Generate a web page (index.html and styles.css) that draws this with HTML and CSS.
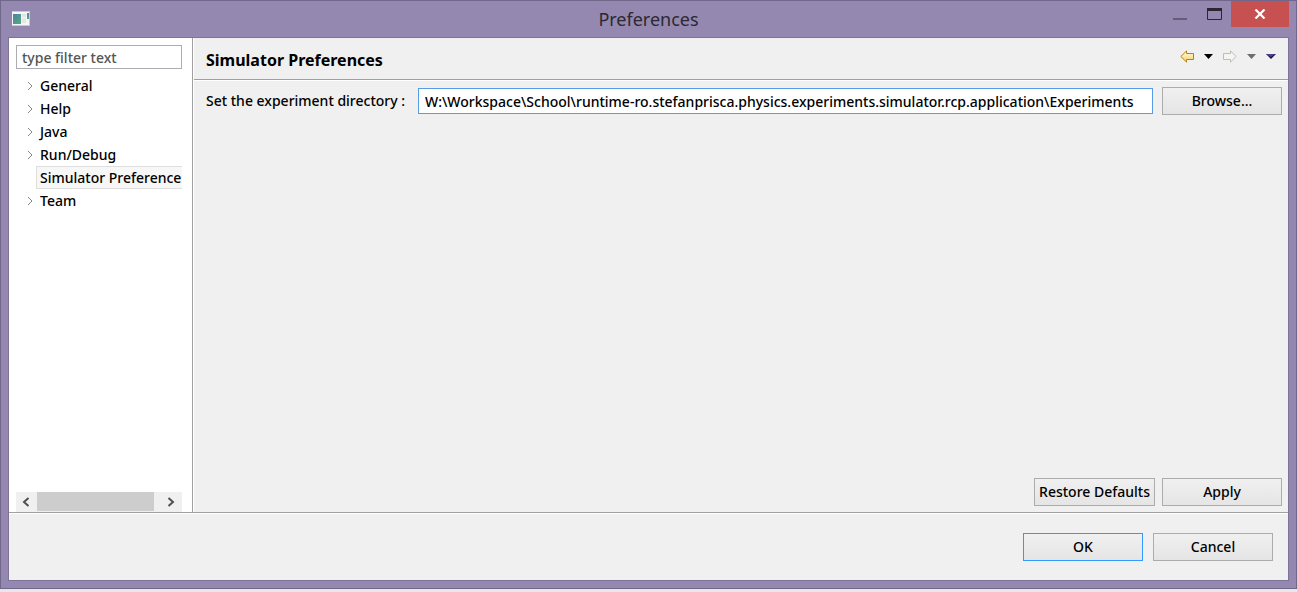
FILE: index.html
```html
<!DOCTYPE html>
<html lang="en">
<head>
<meta charset="utf-8">
<meta name="viewport" content="width=device-width, initial-scale=1">
<title>Preferences</title>
<link rel="stylesheet" href="styles.css">
</head>
<body>
<div class="window">
  <header class="titlebar">
    <svg class="app-icon" width="18" height="15" viewBox="0 0 18 15" aria-hidden="true">
      <defs><linearGradient id="pane" x1="0" y1="0" x2="1" y2="1"><stop offset="0" stop-color="#4d7fae"/><stop offset="1" stop-color="#52ae7a"/></linearGradient></defs>
      <rect width="18" height="15" fill="#c9c8cc"/>
      <rect y="1" width="17" height="13" fill="#f6f6f4"/>
      <rect x="1" y="3" width="8" height="10" fill="url(#pane)"/>
      <rect x="10" y="3" width="4" height="3" fill="#e2e2e6"/>
      <rect x="10" y="7" width="4" height="5" fill="#e6e6e6"/>
      <rect x="15" y="2" width="2" height="6" fill="url(#pane)"/>
    </svg>
    <h1 class="window-title">Preferences</h1>
    <div class="window-controls">
      <button class="win-btn" type="button" aria-label="Minimize"><svg width="14" height="12" viewBox="0 0 14 12"><path d="M0 11h14" stroke="#655b7a" stroke-width="2"/></svg></button>
      <button class="win-btn" type="button" aria-label="Maximize"><svg width="15" height="12" viewBox="0 0 15 12"><path d="M.5 1.5h14v10H.5z" fill="none" stroke="#2a2532"/><path d="M0 1.5h15" stroke="#2a2532" stroke-width="3"/></svg></button>
      <button class="win-btn win-close" type="button" aria-label="Close"><svg width="12" height="10" viewBox="0 0 12 10"><path d="M1.5.5l9 9M10.5.5l-9 9" stroke="#fff" stroke-width="2.2"/></svg></button>
    </div>
  </header>

  <div class="client">
    <div class="panes">
      <nav class="sidebar" aria-label="Preference pages">
        <input class="filter" type="text" placeholder="type filter text" aria-label="Filter">
        <ul class="tree">
          <li class="node"><svg class="twisty" width="6" height="11" viewBox="0 0 6 11"><path d="M1 2l4 4-4 4"/></svg><a class="node-label" href="#general">General</a></li>
          <li class="node"><svg class="twisty" width="6" height="11" viewBox="0 0 6 11"><path d="M1 2l4 4-4 4"/></svg><a class="node-label" href="#help">Help</a></li>
          <li class="node"><svg class="twisty" width="6" height="11" viewBox="0 0 6 11"><path d="M1 2l4 4-4 4"/></svg><a class="node-label" href="#java">Java</a></li>
          <li class="node"><svg class="twisty" width="6" height="11" viewBox="0 0 6 11"><path d="M1 2l4 4-4 4"/></svg><a class="node-label" href="#run">Run/Debug</a></li>
          <li class="node"><span class="twisty"></span><a class="node-label selected" href="#simulator" aria-current="page">Simulator Preferences</a></li>
          <li class="node"><svg class="twisty" width="6" height="11" viewBox="0 0 6 11"><path d="M1 2l4 4-4 4"/></svg><a class="node-label" href="#team">Team</a></li>
        </ul>
        <div class="scrollbar">
          <button class="scroll-btn" type="button" aria-label="Scroll left"><svg width="9" height="10" viewBox="0 0 9 10"><path d="M6.5 1L2 5l4.500 4"/></svg></button>
          <div class="track"><div class="thumb"></div></div>
          <button class="scroll-btn" type="button" aria-label="Scroll right"><svg width="9" height="10" viewBox="0 0 9 10"><path d="M1.500 1L6 5 1.500 9"/></svg></button>
        </div>
      </nav>

      <main class="page">
        <div class="page-head">
          <h2 class="page-title">Simulator Preferences</h2>
          <div class="history">
            <button class="tool" type="button" aria-label="Back"><svg width="14" height="13" viewBox="0 0 14 13"><defs><linearGradient id="gold" x1="0" y1="0" x2="0" y2="1"><stop offset="0" stop-color="#fffbe0"/><stop offset="1" stop-color="#f6d368"/></linearGradient></defs><path d="M.8 6.500L6.500.9v2.600h7v6h-7v2.600z" fill="url(#gold)" stroke="#b9801a"/></svg></button>
            <button class="tool" type="button" aria-label="Back history"><svg width="9" height="5" viewBox="0 0 9 5"><path d="M0 0h9L4.500 5z" fill="#000"/></svg></button>
            <button class="tool" type="button" aria-label="Forward" disabled><svg width="14" height="13" viewBox="0 0 14 13"><path d="M13.200 6.500L7.500.9v2.600h-7v6h7v2.600z" fill="#f4f4f0" stroke="#bdbdb8"/></svg></button>
            <button class="tool" type="button" aria-label="Forward history" disabled><svg width="9" height="5" viewBox="0 0 9 5"><path d="M0 0h9L4.500 5z" fill="#6d6d6d"/></svg></button>
            <button class="tool" type="button" aria-label="View menu"><svg width="10" height="5" viewBox="0 0 10 5"><path d="M0 0h10L5 5z" fill="#16123a"/><path d="M0 0h9L5 3z" fill="#4a4296"/></svg></button>
          </div>
        </div>
        <div class="page-body">
          <div class="field">
            <label class="field-label" for="dir">Set the experiment directory :</label>
            <input class="field-input" id="dir" type="text" value="W:\Workspace\School\runtime-ro.stefanprisca.physics.experiments.simulator.rcp.application\Experiments">
            <button class="btn" type="button">Browse...</button>
          </div>
          <div class="page-actions">
            <button class="btn btn-tight" type="button">Restore Defaults</button>
            <button class="btn" type="button">Apply</button>
          </div>
        </div>
      </main>
    </div>
    <footer class="dialog-actions">
      <button class="btn btn-default" type="button">OK</button>
      <button class="btn" type="button">Cancel</button>
    </footer>
  </div>
</div>
</body>
</html>
```
FILE: styles.css
```css
* { box-sizing: border-box; }

body {
  display: flex;
  min-height: 100vh;
  margin: 0;
  padding-bottom: 3px;
  background: #e8e8e8;
  color: #000;
  font: 500 14px/22px "Segoe UI", "Noto Sans", "Open Sans", sans-serif;
}

button, input { font: inherit; color: inherit; }
button { padding: 0; }
svg { display: block; flex: none; }

.window {
  display: flex;
  flex-direction: column;
  flex: 1;
  min-width: 0;
  padding: 0 7px 7px;
  border: 1px solid #71678a;
  background: #9488b0;
}

.titlebar {
  display: grid;
  grid-template-columns: 126px 1fr 126px;
  align-items: start;
  height: 36px;
}
.app-icon { margin: 10px 0 0 4px; }
.window-title {
  margin: 0;
  font-size: 18px;
  font-weight: 400;
  line-height: 36px;
  text-align: center;
  color: #2b2933;
}
.window-controls { display: flex; justify-content: flex-end; }
.win-btn {
  display: flex;
  align-items: center;
  justify-content: center;
  width: 34px;
  height: 26px;
  border: 0;
  background: none;
}
.win-close { width: 58px; background: #c75050; }

.client {
  display: flex;
  flex-direction: column;
  flex: 1;
  border: 1px solid #7e7399;
  background: #f0f0f0;
}
.panes { display: flex; flex: 1; min-height: 0; }

.sidebar {
  display: flex;
  flex-direction: column;
  width: 184px;
  padding: 7px 10px 0 7px;
  border-right: 1px solid #a0a0a0;
  background: #fff;
}
.filter {
  width: 100%;
  height: 24px;
  padding: 0 5px;
  border: 1px solid #abadb3;
  background: #fff;
}
.filter::placeholder { color: #555; opacity: 1; }
.tree {
  flex: 1;
  margin: 5px 0 0;
  padding: 0;
  overflow: hidden;
  list-style: none;
}
.node {
  display: flex;
  align-items: center;
  gap: 3px;
  height: 23px;
  padding-left: 11px;
}
.twisty { flex: none; width: 6px; fill: none; stroke: #888; }
.node-label {
  padding: 0 3px;
  border: 1px solid transparent;
  line-height: 21px;
  white-space: nowrap;
  color: inherit;
  text-decoration: none;
}
.selected { border-color: #dedede; background: #f7f7f7; }

.scrollbar { display: flex; height: 20px; background: #f0f0f0; }
.scroll-btn {
  display: flex;
  align-items: center;
  justify-content: center;
  width: 21px;
  border: 0;
  background: none;
}
.scroll-btn svg { fill: none; stroke: #505050; stroke-width: 2; }
.track { flex: 1; }
.thumb { width: 94%; height: 19px; background: #cdcdcd; }

.page {
  display: flex;
  flex-direction: column;
  flex: 1;
  min-width: 0;
  border-left: 1px solid #fff;
}
.page-head {
  display: flex;
  align-items: center;
  justify-content: space-between;
  height: 42px;
  padding: 2px 12px 0;
  border-bottom: 1px solid #a0a0a0;
}
.page-title { margin: 0; font-size: 16px; font-weight: 700; line-height: 22px; }
.history { display: flex; align-items: center; gap: 10px; padding-bottom: 7px; }
.tool { border: 0; background: none; }

.page-body {
  display: flex;
  flex-direction: column;
  justify-content: space-between;
  flex: 1;
  padding: 6px 6px 6px 12px;
  border-top: 1px solid #fff;
}
.field { display: flex; align-items: center; gap: 9px; }
.field-label { min-width: 203px; white-space: nowrap; }
.field-input {
  flex: 1;
  min-width: 0;
  height: 26px;
  padding: 0 6px;
  border: 1px solid #569de5;
  background: #fff;
}

.btn {
  width: 120px;
  height: 28px;
  border: 1px solid #acacac;
  background: linear-gradient(#f0f0f0, #e5e5e5);
  white-space: nowrap;
}
.btn-tight { width: 121px; }
.btn-default { border-color: #3399ff; }

.page-actions { display: flex; justify-content: flex-end; gap: 7px; }
.dialog-actions {
  display: flex;
  justify-content: flex-end;
  gap: 10px;
  padding: 20px 15px 19px;
  border-top: 1px solid #a0a0a0;
  box-shadow: inset 0 1px #fff;
}
```
